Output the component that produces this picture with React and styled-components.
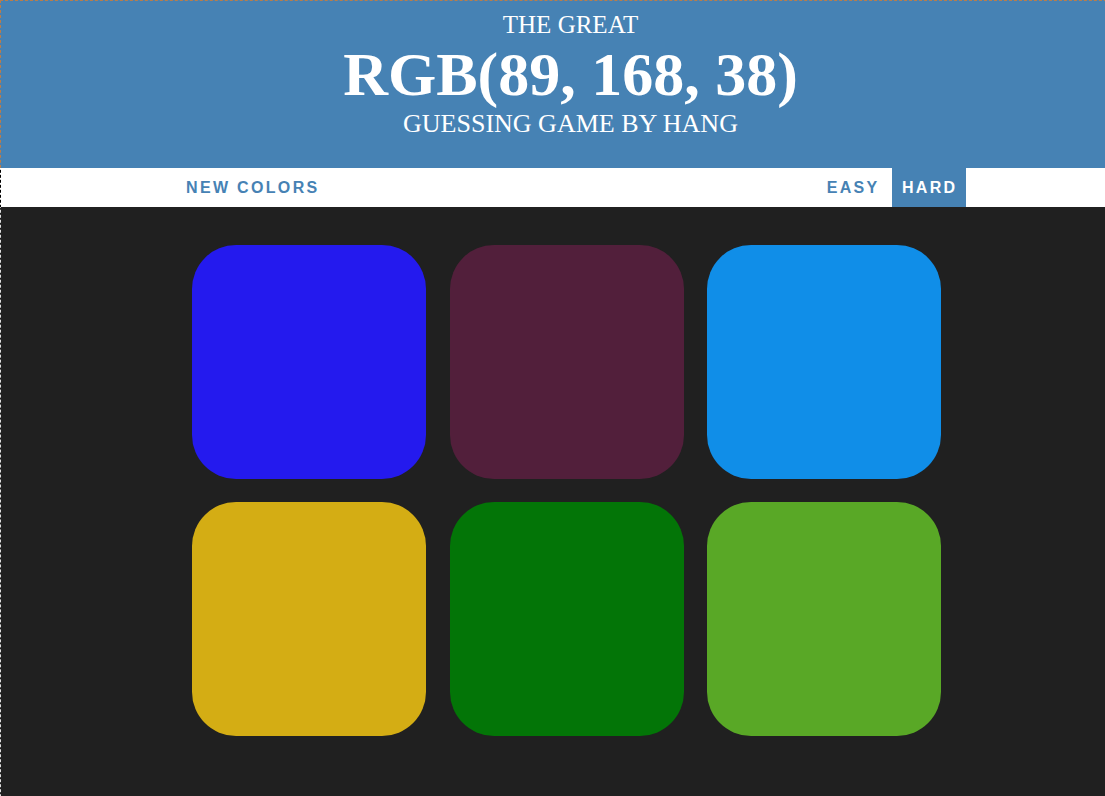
import React from "react";
import styled, { createGlobalStyle } from "styled-components";

const GlobalStyle = createGlobalStyle`
  html, body { margin: 0; padding: 0; }
  body {
    background: #202020;
    font-family: "Liberation Serif", "Times New Roman", serif;
    min-height: 796px;
  }
  body::after {
    content: "";
    position: fixed;
    left: 0;
    top: 0;
    width: 2000px;
    height: 2000px;
    border-top: 1px dashed #fff;
    border-left: 1px dashed #fff;
    mix-blend-mode: difference;
    pointer-events: none;
  }
`;

const Header = styled.header`
  background: #4682b4;
  color: #fff;
  text-align: center;
  height: 168px;
  padding: 10px 0 0 36px;
  box-sizing: border-box;
  font-weight: normal;
  text-transform: uppercase;
`;

const SubLine = styled.div`
  font-size: ${(p) => p.$size || 25}px;
  line-height: 30px;
`;

const ColorDisplay = styled.div`
  font-size: 62px;
  font-weight: bold;
  line-height: 69px;
`;

const Stripe = styled.nav`
  background: #fff;
  height: 39px;
  display: flex;
`;

const StripeInner = styled.div`
  margin-left: 176px;
  width: 789.5px;
  display: flex;
  justify-content: space-between;
  align-items: stretch;
`;

const Group = styled.div`
  display: flex;
  gap: 4.4px;
`;

const NavButton = styled.button`
  border: none;
  background: ${(p) => (p.$selected ? "#4682b4" : "transparent")};
  color: ${(p) => (p.$selected ? "#fff" : "#4682b4")};
  font-family: "Liberation Sans", Arial, sans-serif;
  font-weight: 700;
  font-size: 16px;
  letter-spacing: 2.33px;
  text-transform: uppercase;
  padding: 0 8px 0 10px;
  height: 100%;
  cursor: pointer;
  outline: none;
`;

const Board = styled.main`
  display: grid;
  grid-template-columns: repeat(3, 234px);
  grid-auto-rows: 234px;
  column-gap: 23.5px;
  row-gap: 23px;
  margin: 38px 0 0 192px;
`;

const Square = styled.div`
  background: ${(p) => p.$color};
  border-radius: 44px;
`;

const colors = [
  "rgb(36, 26, 238)",
  "rgb(82, 31, 59)",
  "rgb(16, 142, 232)",
  "rgb(212, 173, 20)",
  "rgb(3, 117, 7)",
  "rgb(89, 168, 38)",
];

export default function App() {
  return (
    <>
      <GlobalStyle />
      <Header>
        <SubLine>The Great</SubLine>
        <ColorDisplay>RGB(89, 168, 38)</ColorDisplay>
        <SubLine $size={26}>Guessing Game by Hang</SubLine>
      </Header>
      <Stripe>
        <StripeInner>
          <Group>
            <NavButton>New Colors</NavButton>
          </Group>
          <Group>
            <NavButton>Easy</NavButton>
            <NavButton $selected>Hard</NavButton>
          </Group>
        </StripeInner>
      </Stripe>
      <Board>
        {colors.map((c, i) => (
          <Square key={i} $color={c} />
        ))}
      </Board>
    </>
  );
}
